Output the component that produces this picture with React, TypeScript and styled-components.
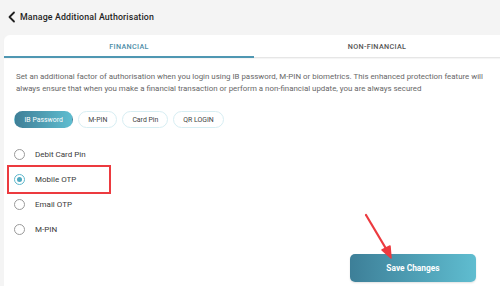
import React, { useState } from "react";
import styled, { createGlobalStyle } from "styled-components";

const Global = createGlobalStyle`
  html, body { margin: 0; padding: 0; background: #f4f4f4; }
  body { font-family: Roboto, "Noto Sans", Arial, sans-serif; width: 500px; height: 286px; overflow: hidden; }
  * { box-sizing: border-box; }
`;

const Page = styled.div`
  position: relative;
  width: 500px;
  height: 286px;
  display: flex;
  flex-direction: column;
`;

const Header = styled.div`
  height: 35px;
  display: flex;
  align-items: center;
  gap: 3px;
  padding: 0 0 2px 7px;
  color: #1f1f1f;
  font-size: 8.8px;
  font-weight: 500;
  letter-spacing: 0.15px;
`;

const Card = styled.div`
  flex: 1;
  margin-left: 4px;
  background: #fff;
  border-top-left-radius: 6px;
  display: flex;
  flex-direction: column;
`;

const Tabs = styled.div`
  display: grid;
  grid-template-columns: 250px 1fr;
  height: 23px;
  border-bottom: 1px solid #e6e6e6;
  box-shadow: 0 1px 1px rgba(0,0,0,0.04);
`;

const Tab = styled.div<{ $active?: boolean }>`
  display: flex;
  align-items: center;
  justify-content: center;
  font-size: 7.2px;
  font-weight: 500;
  letter-spacing: 0.35px;
  color: ${p => (p.$active ? "#4e8ea8" : "#555")};
  border-bottom: 2px solid ${p => (p.$active ? "#4f97b2" : "transparent")};
  margin-bottom: -1px;
  padding-top: 1px;
`;

const Body = styled.div`
  flex: 1;
  padding: 13px 8px 4px 12px;
  display: flex;
  flex-direction: column;
`;

const Desc = styled.p`
  margin: 0;
  font-size: 7.9px;
  line-height: 11.5px;
  color: #676767;
`;

const Chips = styled.div`
  display: flex;
  gap: 5px;
  margin: 17px 0 0 -2px;
`;

const Chip = styled.div<{ $active?: boolean }>`
  height: 17px;
  padding: 0 ${p => (p.$active ? 9.5 : 9)}px;
  border-radius: 9px;
  display: flex;
  align-items: center;
  font-size: 6.9px;
  color: ${p => (p.$active ? "#fff" : "#444")};
  background: ${p => (p.$active ? "linear-gradient(90deg, #3f7f97, #5fbdd0)" : "#fff")};
  border: 1px solid ${p => (p.$active ? "transparent" : "#d7eef3")};
`;

const Options = styled.div`
  display: flex;
  flex-direction: column;
  margin: 14px 0 0 -2px;
`;

const Option = styled.label`
  height: 25px;
  display: flex;
  align-items: center;
  gap: 10px;
  font-size: 8px;
  color: #3a3a3a;
  cursor: pointer;
`;

const Radio = styled.span<{ $checked?: boolean }>`
  width: 11px;
  height: 11px;
  border-radius: 50%;
  border: 1.2px solid ${p => (p.$checked ? "#5db7cc" : "#9a9a9a")};
  display: flex;
  align-items: center;
  justify-content: center;
  &::after {
    content: "";
    width: 5px;
    height: 5px;
    border-radius: 50%;
    background: ${p => (p.$checked ? "#4fa9c0" : "transparent")};
  }
`;

const Footer = styled.div`
  display: flex;
  justify-content: flex-end;
  padding-right: 16px;
  margin-top: auto;
`;

const SaveButton = styled.button`
  width: 126px;
  height: 28px;
  border: none;
  border-radius: 5px;
  background: linear-gradient(90deg, #3d7f98, #5fbdd0);
  color: #fff;
  font-family: inherit;
  font-size: 8.4px;
  font-weight: 700;
  box-shadow: 0 1px 2px rgba(0,0,0,0.12);
`;

const Highlight = styled.div`
  position: absolute;
  left: 7px;
  top: 165px;
  width: 104px;
  height: 29px;
  border: 2px solid #ec3a3f;
  pointer-events: none;
`;

const Arrow = styled.svg`
  position: absolute;
  left: 360px;
  top: 210px;
  width: 40px;
  height: 55px;
  pointer-events: none;
`;

const options = ["Debit Card Pin", "Mobile OTP", "Email OTP", "M-PIN"];
const chips = ["IB Password", "M-PIN", "Card Pin", "QR LOGIN"];

export default function App() {
  const [selected, setSelected] = useState(1);
  const [chip, setChip] = useState(0);
  return (
    <>
      <Global />
      <Page>
        <Header>
          <svg width="10" height="12" viewBox="0 0 10 12">
            <path d="M7 1.5 L2.5 6 L7 10.5" fill="none" stroke="#1f1f1f" strokeWidth="1.8" strokeLinecap="round" strokeLinejoin="round" />
          </svg>
          Manage Additional Authorisation
        </Header>
        <Card>
          <Tabs>
            <Tab $active>FINANCIAL</Tab>
            <Tab>NON-FINANCIAL</Tab>
          </Tabs>
          <Body>
            <Desc>
              Set an additional factor of authorisation when you login using IB password, M-PIN or biometrics. This enhanced protection feature will
              always ensure that when you make a financial transaction or perform a non-financial update, you are always secured
            </Desc>
            <Chips>
              {chips.map((c, i) => (
                <Chip key={c} $active={i === chip} onClick={() => setChip(i)}>{c}</Chip>
              ))}
            </Chips>
            <Options>
              {options.map((o, i) => (
                <Option key={o} onClick={() => setSelected(i)}>
                  <Radio $checked={i === selected} />
                  {o}
                </Option>
              ))}
            </Options>
            <Footer>
              <SaveButton>Save Changes</SaveButton>
            </Footer>
          </Body>
        </Card>
        <Highlight />
        <Arrow viewBox="0 0 40 55">
          <line x1="6" y1="5" x2="28" y2="42" stroke="#ec3a3f" strokeWidth="2.2" strokeLinecap="round" />
          <path d="M22 40 L31 48 L30 36 Z" fill="#ec3a3f" stroke="#ec3a3f" strokeWidth="1.5" strokeLinejoin="round" />
        </Arrow>
      </Page>
    </>
  );
}
